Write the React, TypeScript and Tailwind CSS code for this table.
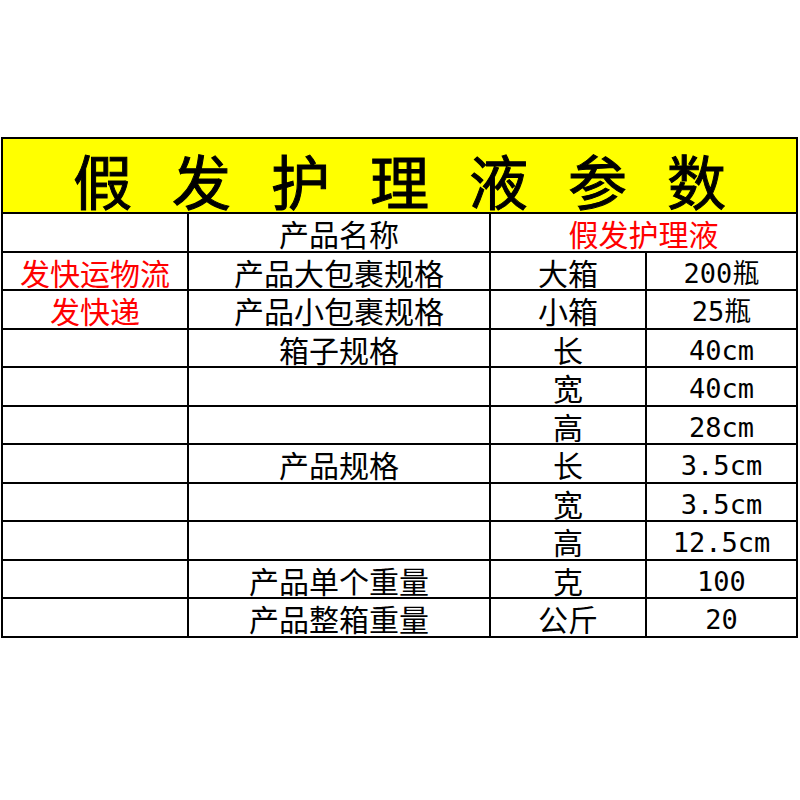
import React from "react";

const CJK = "font-['Noto_Sans_CJK_SC',sans-serif]";
const NUM = "font-['DejaVu_Sans_Mono','Noto_Sans_CJK_SC',monospace]";

type Row = [string, string, string, string];

const rows: Row[] = [
  ["发快运物流", "产品大包裹规格", "大箱", "200瓶"],
  ["发快递", "产品小包裹规格", "小箱", "25瓶"],
  ["", "箱子规格", "长", "40cm"],
  ["", "", "宽", "40cm"],
  ["", "", "高", "28cm"],
  ["", "产品规格", "长", "3.5cm"],
  ["", "", "宽", "3.5cm"],
  ["", "", "高", "12.5cm"],
  ["", "产品单个重量", "克", "100"],
  ["", "产品整箱重量", "公斤", "20"],
];

const title = ["假", "发", "护", "理", "液", "参", "数"];

const cellCjk = `bg-white flex items-center justify-center ${CJK} text-[30px] leading-[31px] pt-[3px]`;

export default function App() {
  return (
    <div className="w-[800px] h-[800px] bg-white pt-[137px] pl-[1px]">
      <div className="w-[797px] grid grid-cols-[184px_300px_154px_149px] grid-rows-[73px_repeat(11,36.5px)] gap-[2px] p-[2px] bg-black">
        <div className="col-span-4 bg-[#ffff00] flex items-center justify-center gap-[40px] pt-[8px]">
          {title.map((c, i) => (
            <span
              key={i}
              className={`${CJK} text-[59px] leading-none text-black font-normal [-webkit-text-stroke:1px_black]`}
            >
              {c}
            </span>
          ))}
        </div>

        <div className="bg-white" />
        <div className={`${cellCjk} text-black`}>产品名称</div>
        <div className={`col-span-2 ${cellCjk} text-[#ff0000]`}>假发护理液</div>

        {rows.map((r, i) => (
          <React.Fragment key={i}>
            <div className={`${cellCjk} text-[#ff0000]`}>{r[0]}</div>
            <div className={`${cellCjk} text-black`}>{r[1]}</div>
            <div className={`${cellCjk} text-black`}>{r[2]}</div>
            <div className={`bg-white flex items-center justify-center ${NUM} text-[27px] leading-[28px] pt-[6px] text-black`}>
              {r[3]}
            </div>
          </React.Fragment>
        ))}
      </div>
    </div>
  );
}
